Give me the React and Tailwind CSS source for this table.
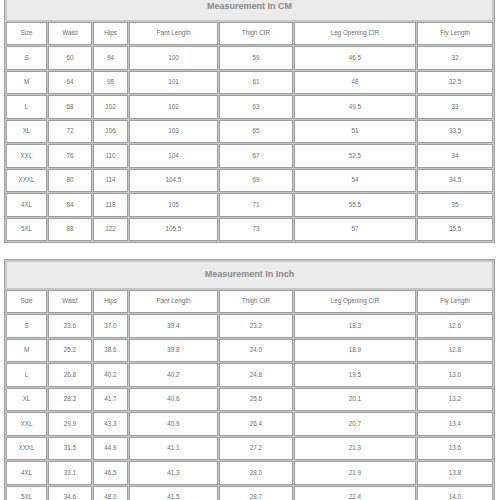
const headers = ["Size", "Waist", "Hips", "Pant Length", "Thigh CIR", "Leg Opening CIR", "Fly Length"];
const widths = [41, 44, 35, 89, 74, 122, 76];

const cmRows = [
  ["S", "60", "94", "100", "59", "46.5", "32"],
  ["M", "64", "98", "101", "61", "48", "32.5"],
  ["L", "68", "102", "102", "63", "49.5", "33"],
  ["XL", "72", "106", "103", "65", "51", "33.5"],
  ["XXL", "76", "110", "104", "67", "52.5", "34"],
  ["XXXL", "80", "114", "104.5", "69", "54", "34.5"],
  ["4XL", "84", "118", "105", "71", "55.5", "35"],
  ["5XL", "88", "122", "105.5", "73", "57", "35.5"],
];

const inchRows = [
  ["S", "23.6", "37.0", "39.4", "23.2", "18.3", "12.6"],
  ["M", "25.2", "38.6", "39.8", "24.0", "18.9", "12.8"],
  ["L", "26.8", "40.2", "40.2", "24.8", "19.5", "13.0"],
  ["XL", "28.3", "41.7", "40.6", "25.6", "20.1", "13.2"],
  ["XXL", "29.9", "43.3", "40.9", "26.4", "20.7", "13.4"],
  ["XXXL", "31.5", "44.9", "41.1", "27.2", "21.3", "13.6"],
  ["4XL", "33.1", "46.5", "41.3", "28.0", "21.9", "13.8"],
  ["5XL", "34.6", "48.0", "41.5", "28.7", "22.4", "14.0"],
];

function SizeTable({ title, rows }) {
  const cell = "h-[23.5px] p-0 border border-[#9e9e9e] bg-white text-center align-middle text-[6.3px] text-[#6e6e6e] leading-none";
  return (
    <table className="ml-[4px] w-[491px] table-fixed border-separate border-spacing-[1px] border border-[#a3a3a3] bg-[#c6c6c6]">
      <colgroup>
        {widths.map((w, i) => (
          <col key={i} style={{ width: w }} />
        ))}
      </colgroup>
      <tbody>
        <tr>
          <td
            colSpan={7}
            className="h-[27.5px] p-0 border border-[#c8c8c8] bg-[#ebebeb] text-center align-middle text-[9px] font-bold text-[#8a8a8a]"
          >
            {title}
          </td>
        </tr>
        <tr>
          {headers.map((h) => (
            <td key={h} className={cell}>
              {h}
            </td>
          ))}
        </tr>
        {rows.map((r) => (
          <tr key={r[0]}>
            {r.map((v, i) => (
              <td key={i} className={cell}>
                {v}
              </td>
            ))}
          </tr>
        ))}
      </tbody>
    </table>
  );
}

export default function App() {
  return (
    <div className="w-[500px] h-[500px] overflow-hidden bg-white font-['Liberation_Sans',Arial,sans-serif]">
      <div className="-mt-[9px] flex flex-col gap-[16px]">
        <SizeTable title="Measurement In CM" rows={cmRows} />
        <SizeTable title="Measurement In Inch" rows={inchRows} />
      </div>
    </div>
  );
}
